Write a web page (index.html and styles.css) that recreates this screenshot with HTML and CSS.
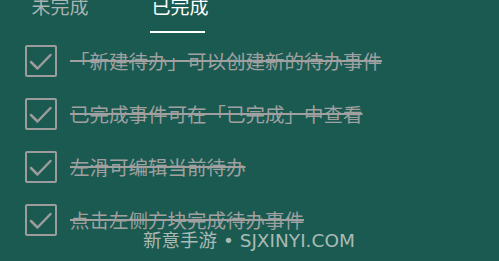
FILE: index.html
```html
<!DOCTYPE html>
<html lang="zh">
<head>
<meta charset="utf-8">
<link rel="stylesheet" href="styles.css">
</head>
<body>
<div class="screen">
  <div class="tabs">
    <div class="tab">未完成</div>
    <div class="tab active">已完成</div>
  </div>
  <ul class="list">
    <li class="item">
      <span class="box"><svg viewBox="0 0 32 32" width="32" height="32"><path d="M6 17 L12.5 23.5 L25.5 10" fill="none" stroke="#9c9c9c" stroke-width="2.5" stroke-linecap="round" stroke-linejoin="round"/></svg></span>
      <span class="label">「新建待办」可以创建新的待办事件</span>
    </li>
    <li class="item">
      <span class="box"><svg viewBox="0 0 32 32" width="32" height="32"><path d="M6 17 L12.5 23.5 L25.5 10" fill="none" stroke="#9c9c9c" stroke-width="2.5" stroke-linecap="round" stroke-linejoin="round"/></svg></span>
      <span class="label">已完成事件可在「已完成」中查看</span>
    </li>
    <li class="item">
      <span class="box"><svg viewBox="0 0 32 32" width="32" height="32"><path d="M6 17 L12.5 23.5 L25.5 10" fill="none" stroke="#9c9c9c" stroke-width="2.5" stroke-linecap="round" stroke-linejoin="round"/></svg></span>
      <span class="label">左滑可编辑当前待办</span>
    </li>
    <li class="item">
      <span class="box"><svg viewBox="0 0 32 32" width="32" height="32"><path d="M6 17 L12.5 23.5 L25.5 10" fill="none" stroke="#9c9c9c" stroke-width="2.5" stroke-linecap="round" stroke-linejoin="round"/></svg></span>
      <span class="label">点击左侧方块完成待办事件</span>
    </li>
  </ul>
  <div class="watermark">新意手游 • SJXINYI.COM</div>
</div>
</body>
</html>
```
FILE: styles.css
```css
html, body {
  margin: 0;
  padding: 0;
  background: #1b5a50;
}
.screen {
  position: relative;
  width: 499px;
  height: 261px;
  overflow: hidden;
  font-family: "Noto Sans CJK SC", "Noto Sans", sans-serif;
}
.tabs {
  display: flex;
  height: 34px;
  margin-top: -7px;
}
.tab {
  width: 120px;
  text-align: center;
  font-size: 19px;
  line-height: 26px;
  color: #a9b3b1;
  position: relative;
}
.tab.active {
  color: #ffffff;
}
.tab.active::after {
  content: "";
  position: absolute;
  left: 30px;
  width: 55px;
  top: 38px;
  height: 2px;
  background: #ffffff;
}
.list {
  list-style: none;
  margin: 7px 0 0 0;
  padding: 0 0 0 25px;
}
.item {
  display: flex;
  align-items: center;
  height: 53px;
  gap: 13px;
}
.box {
  box-sizing: border-box;
  width: 32px;
  height: 32px;
  border: 2px solid #9c9c9c;
  border-radius: 2px;
  display: flex;
  align-items: center;
  justify-content: center;
}
.box svg {
  display: block;
  flex: none;
}
.label {
  font-size: 19.5px;
  line-height: 22px;
  color: #a0a0a0;
  text-decoration: line-through;
  text-decoration-thickness: 2px;
  white-space: nowrap;
}
.watermark {
  position: absolute;
  left: 143px;
  top: 231px;
  font-family: "DejaVu Sans", "Noto Sans CJK SC", sans-serif;
  font-size: 18.5px;
  line-height: 19px;
  color: #a9bab7;
  white-space: nowrap;
}
```
